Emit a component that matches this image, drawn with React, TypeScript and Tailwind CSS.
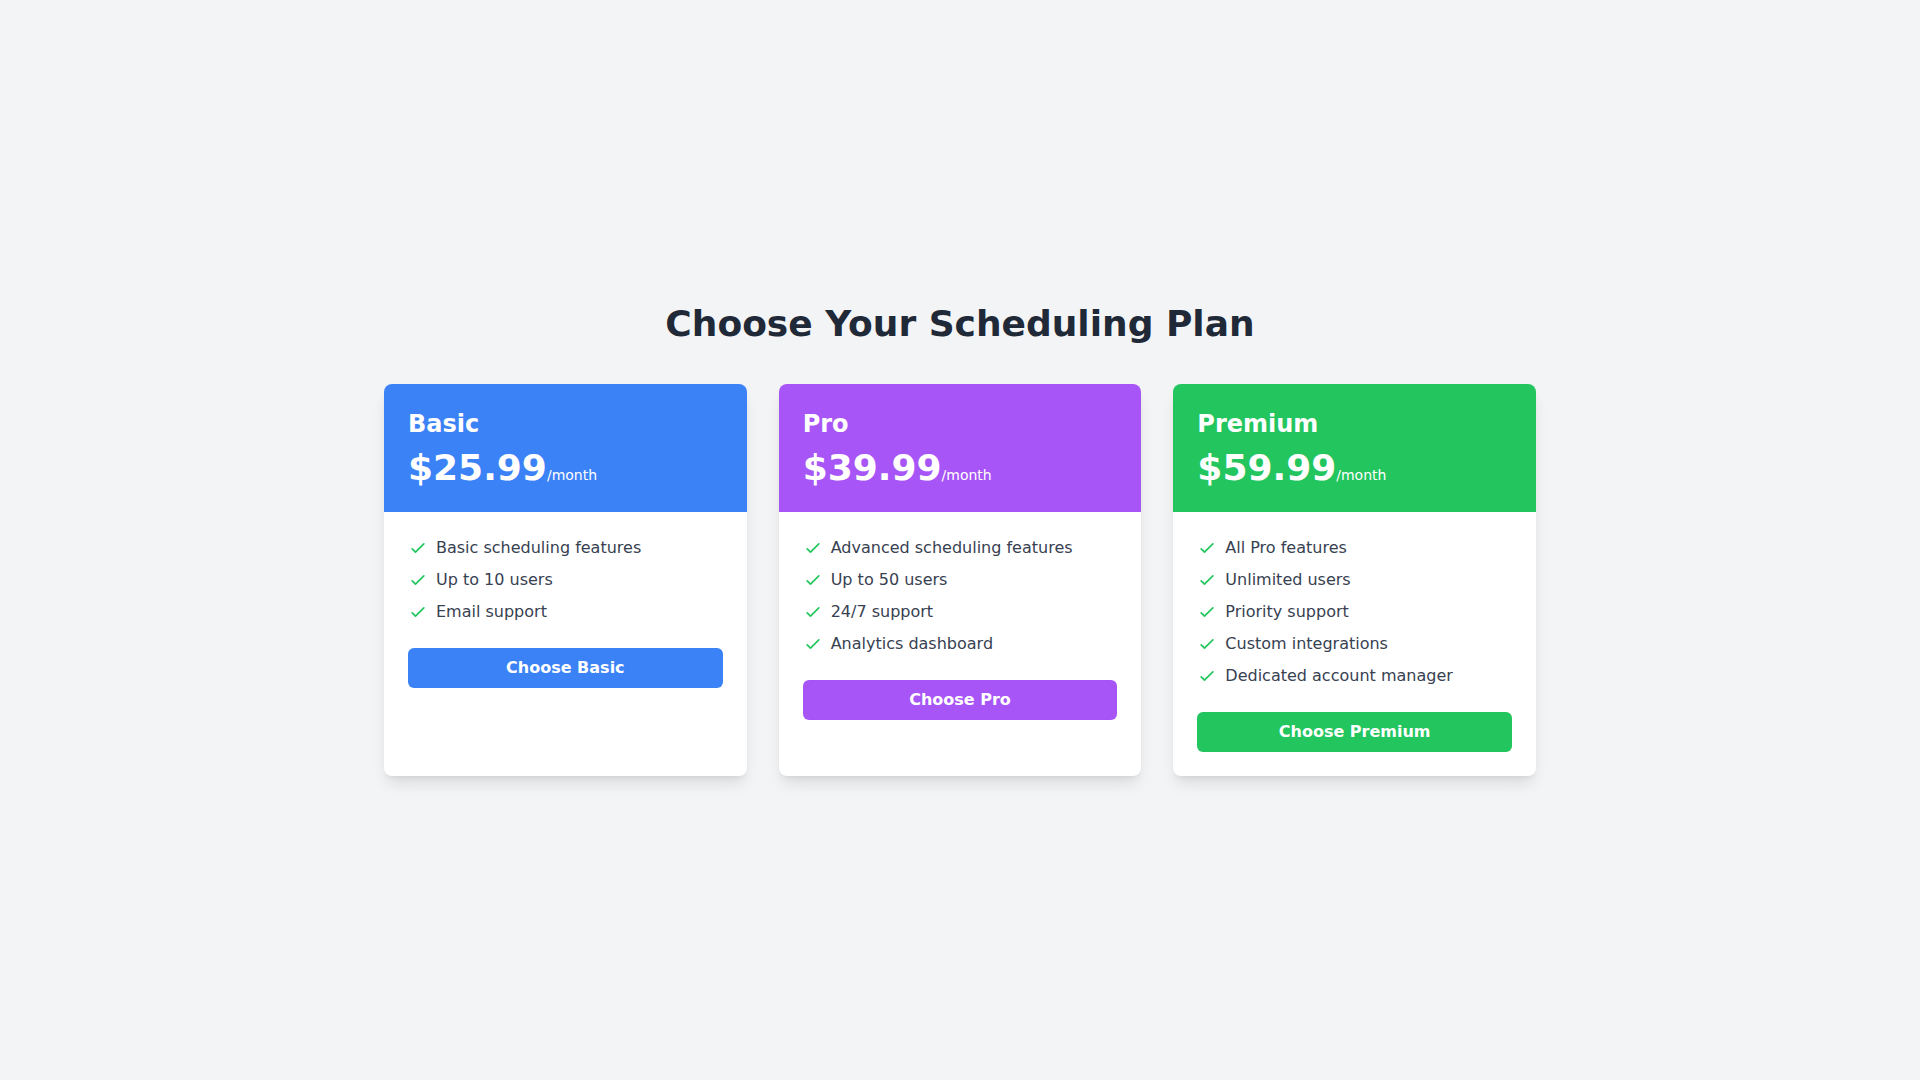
import React from "react";

type Plan = {
  name: string;
  price: string;
  features: string[];
  header: string;
  button: string;
};

const plans: Plan[] = [
  {
    name: "Basic",
    price: "$25.99",
    features: ["Basic scheduling features", "Up to 10 users", "Email support"],
    header: "bg-[#3b82f6]",
    button: "bg-[#3b82f6]",
  },
  {
    name: "Pro",
    price: "$39.99",
    features: ["Advanced scheduling features", "Up to 50 users", "24/7 support", "Analytics dashboard"],
    header: "bg-[#a855f7]",
    button: "bg-[#a855f7]",
  },
  {
    name: "Premium",
    price: "$59.99",
    features: ["All Pro features", "Unlimited users", "Priority support", "Custom integrations", "Dedicated account manager"],
    header: "bg-[#22c55e]",
    button: "bg-[#22c55e]",
  },
];

function CheckIcon() {
  return (
    <svg
      className="w-5 h-5 text-[#22c55e] mr-2 shrink-0"
      viewBox="0 0 24 24"
      fill="none"
      stroke="currentColor"
      strokeWidth={2}
      strokeLinecap="round"
      strokeLinejoin="round"
    >
      <path d="M5 13l4 4L19 7" />
    </svg>
  );
}

export default function App() {
  return (
    <div
      className="min-h-screen bg-[#f3f4f6] flex flex-col items-center justify-center"
      style={{ fontFamily: '"DejaVu Sans", sans-serif' }}
    >
      <h1 className="text-4xl font-bold text-[#1f2937] mb-10">Choose Your Scheduling Plan</h1>
      <div className="w-full max-w-6xl grid grid-cols-3 gap-8">
        {plans.map((p) => (
          <div
            key={p.name}
            className="bg-white rounded-lg overflow-hidden shadow-[0_10px_15px_-3px_rgba(0,0,0,0.1),0_4px_6px_-4px_rgba(0,0,0,0.1)]"
          >
            <div className={`${p.header} p-6 text-white`}>
              <h2 className="text-2xl font-bold mb-2">{p.name}</h2>
              <div className="flex items-baseline">
                <span className="text-4xl font-bold">{p.price}</span>
                <span className="text-sm">/month</span>
              </div>
            </div>
            <div className="p-6">
              <ul className="space-y-2 mb-6">
                {p.features.map((f) => (
                  <li key={f} className="flex items-center text-[#374151]">
                    <CheckIcon />
                    <span>{f}</span>
                  </li>
                ))}
              </ul>
              <button className={`w-full ${p.button} text-white font-bold py-2 rounded-md`}>
                Choose {p.name}
              </button>
            </div>
          </div>
        ))}
      </div>
    </div>
  );
}
